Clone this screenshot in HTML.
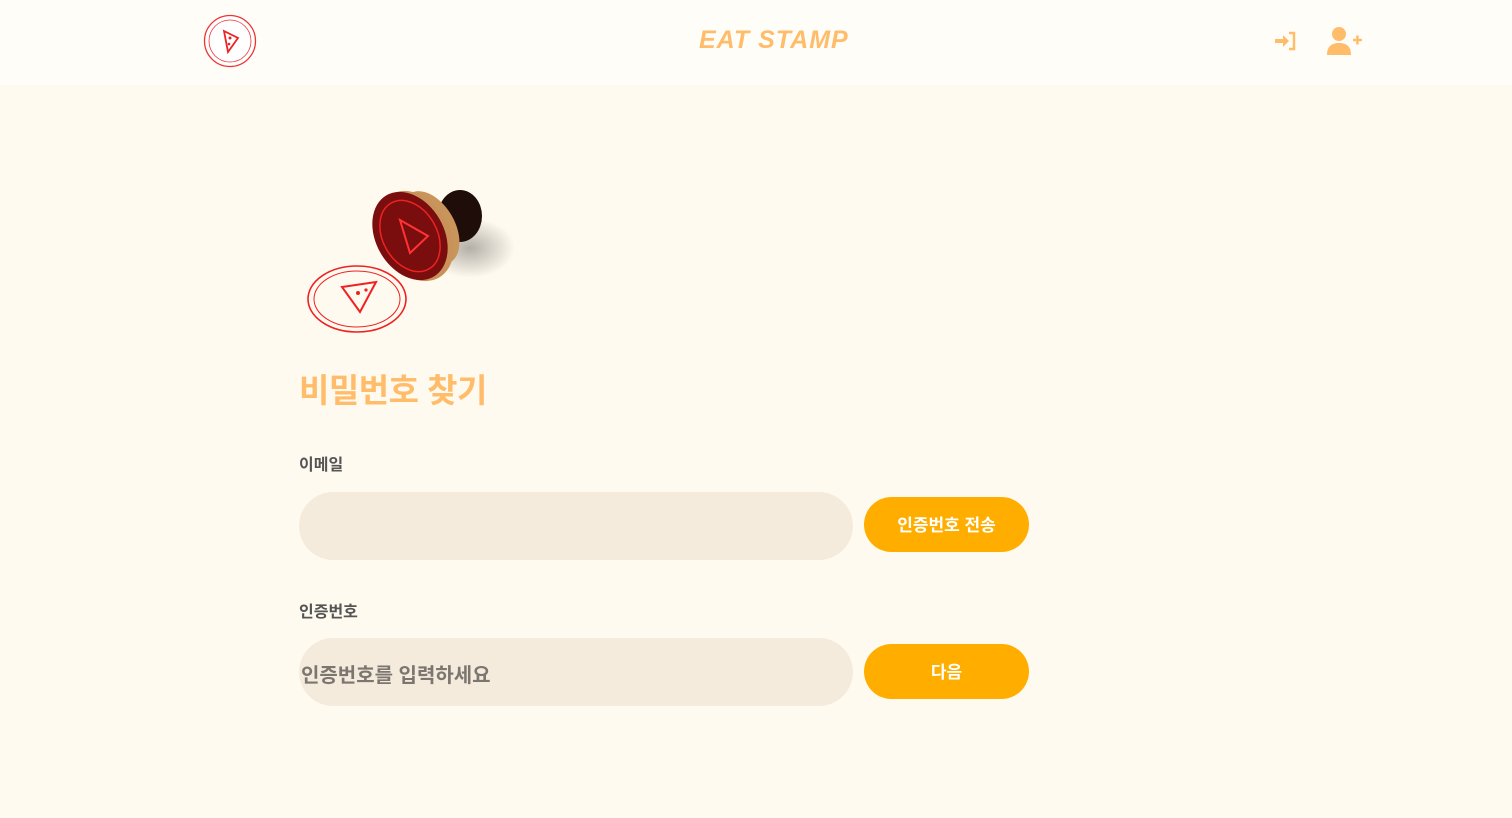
<!DOCTYPE html>
<html><head><meta charset="utf-8"><style>
*{margin:0;padding:0;box-sizing:border-box}
body{width:1512px;height:818px;background:#fffaef;font-family:"Liberation Sans","Noto Sans CJK KR",sans-serif;position:relative;overflow:hidden}
.hdr{position:absolute;left:0;top:0;width:1512px;height:85px;background:#fffdf8}
.abs{position:absolute}
.title{left:299px;top:364px;font-size:33px;font-weight:700;color:#ffbd6b;letter-spacing:-0.5px}
.lbl{font-size:16px;font-weight:700;color:#555;left:299px}
.inp{left:299px;width:554px;height:68px;border-radius:34px;background:#f5ebdc}
.btn{left:864px;width:165px;height:55px;border-radius:28px;background:#ffae00;color:#fff;font-weight:700;font-size:17px;text-align:center;line-height:57px}
</style></head><body>
<div class="hdr"></div>
<svg class="abs" style="left:203px;top:14px" width="54" height="54" viewBox="0 0 54 54">
<circle cx="27" cy="27" r="25.5" fill="#fff" stroke="#e33" stroke-width="1.3"/>
<circle cx="27" cy="27" r="21" fill="none" stroke="#e33" stroke-width="0.8"/>
<path d="M21 17 L35 24 L25 38 Z" fill="none" stroke="#e22" stroke-width="1.8"/>
<circle cx="27" cy="24" r="1.5" fill="#e22"/><circle cx="26" cy="30" r="1.3" fill="#e22"/>
</svg>
<div class="abs" style="left:699px;top:26px;font-size:25px;font-weight:700;font-style:italic;color:#ffbd6b;letter-spacing:1px;font-family:'Liberation Sans',sans-serif">EAT STAMP</div>
<svg class="abs" style="left:1274px;top:31px" width="24" height="20" viewBox="0 0 24 20">
<path d="M1 8h8V4l6 6-6 6v-4H1z" fill="#ffbd6b"/>
<path d="M15 2h5v16h-5" fill="none" stroke="#ffbd6b" stroke-width="2.5"/>
</svg>
<svg class="abs" style="left:1326px;top:26px" width="38" height="30" viewBox="0 0 38 30">
<circle cx="13" cy="8" r="7" fill="#ffbd6b"/>
<path d="M1 29c0-9 5-12 12-12s12 3 12 12z" fill="#ffbd6b"/>
<path d="M27 14h9M31.5 9.5v9" stroke="#ffbd6b" stroke-width="2.5"/>
</svg>
<svg class="abs" style="left:300px;top:178px" width="215" height="160" viewBox="0 0 215 160">
<defs><radialGradient id="sh" cx="0.5" cy="0.5" r="0.5"><stop offset="0" stop-color="#000" stop-opacity="0.3"/><stop offset="1" stop-color="#000" stop-opacity="0"/></radialGradient></defs>
<ellipse cx="170" cy="70" rx="45" ry="30" fill="url(#sh)"/>
<ellipse cx="160" cy="38" rx="22" ry="26" fill="#1f0d0a"/>
<ellipse cx="130" cy="50" rx="25" ry="40" transform="rotate(-30 130 50)" fill="#c9955a"/>
<ellipse cx="115" cy="58" rx="35" ry="48" transform="rotate(-30 115 58)" fill="#c8925a"/>
<ellipse cx="110" cy="58" rx="34" ry="47" transform="rotate(-30 110 58)" fill="#7a0d0d"/>
<ellipse cx="110" cy="58" rx="27" ry="38" transform="rotate(-30 110 58)" fill="none" stroke="#e22" stroke-width="1.5"/>
<path d="M100 42 L128 58 L110 75 Z" fill="none" stroke="#f33" stroke-width="2"/>
<ellipse cx="57" cy="121" rx="49" ry="33" fill="none" stroke="#e22" stroke-width="1.6"/>
<ellipse cx="57" cy="121" rx="43" ry="28" fill="none" stroke="#e22" stroke-width="1"/>
<path d="M42 109 L76 104 L60 134 Z" fill="none" stroke="#e22" stroke-width="2"/>
<circle cx="58" cy="115" r="2" fill="#e22"/><circle cx="66" cy="112" r="1.6" fill="#e22"/>
</svg>
<div class="abs title">비밀번호 찾기</div>
<div class="abs lbl" style="top:451px">이메일</div>
<div class="abs inp" style="top:492px"></div>
<div class="abs btn" style="top:497px">인증번호 전송</div>
<div class="abs lbl" style="top:598px">인증번호</div>
<div class="abs inp" style="top:638px"></div>
<div class="abs" style="left:301px;top:659px;font-size:20px;font-weight:700;color:#7c7670">인증번호를 입력하세요</div>
<div class="abs btn" style="top:644px">다음</div>
</body></html>
